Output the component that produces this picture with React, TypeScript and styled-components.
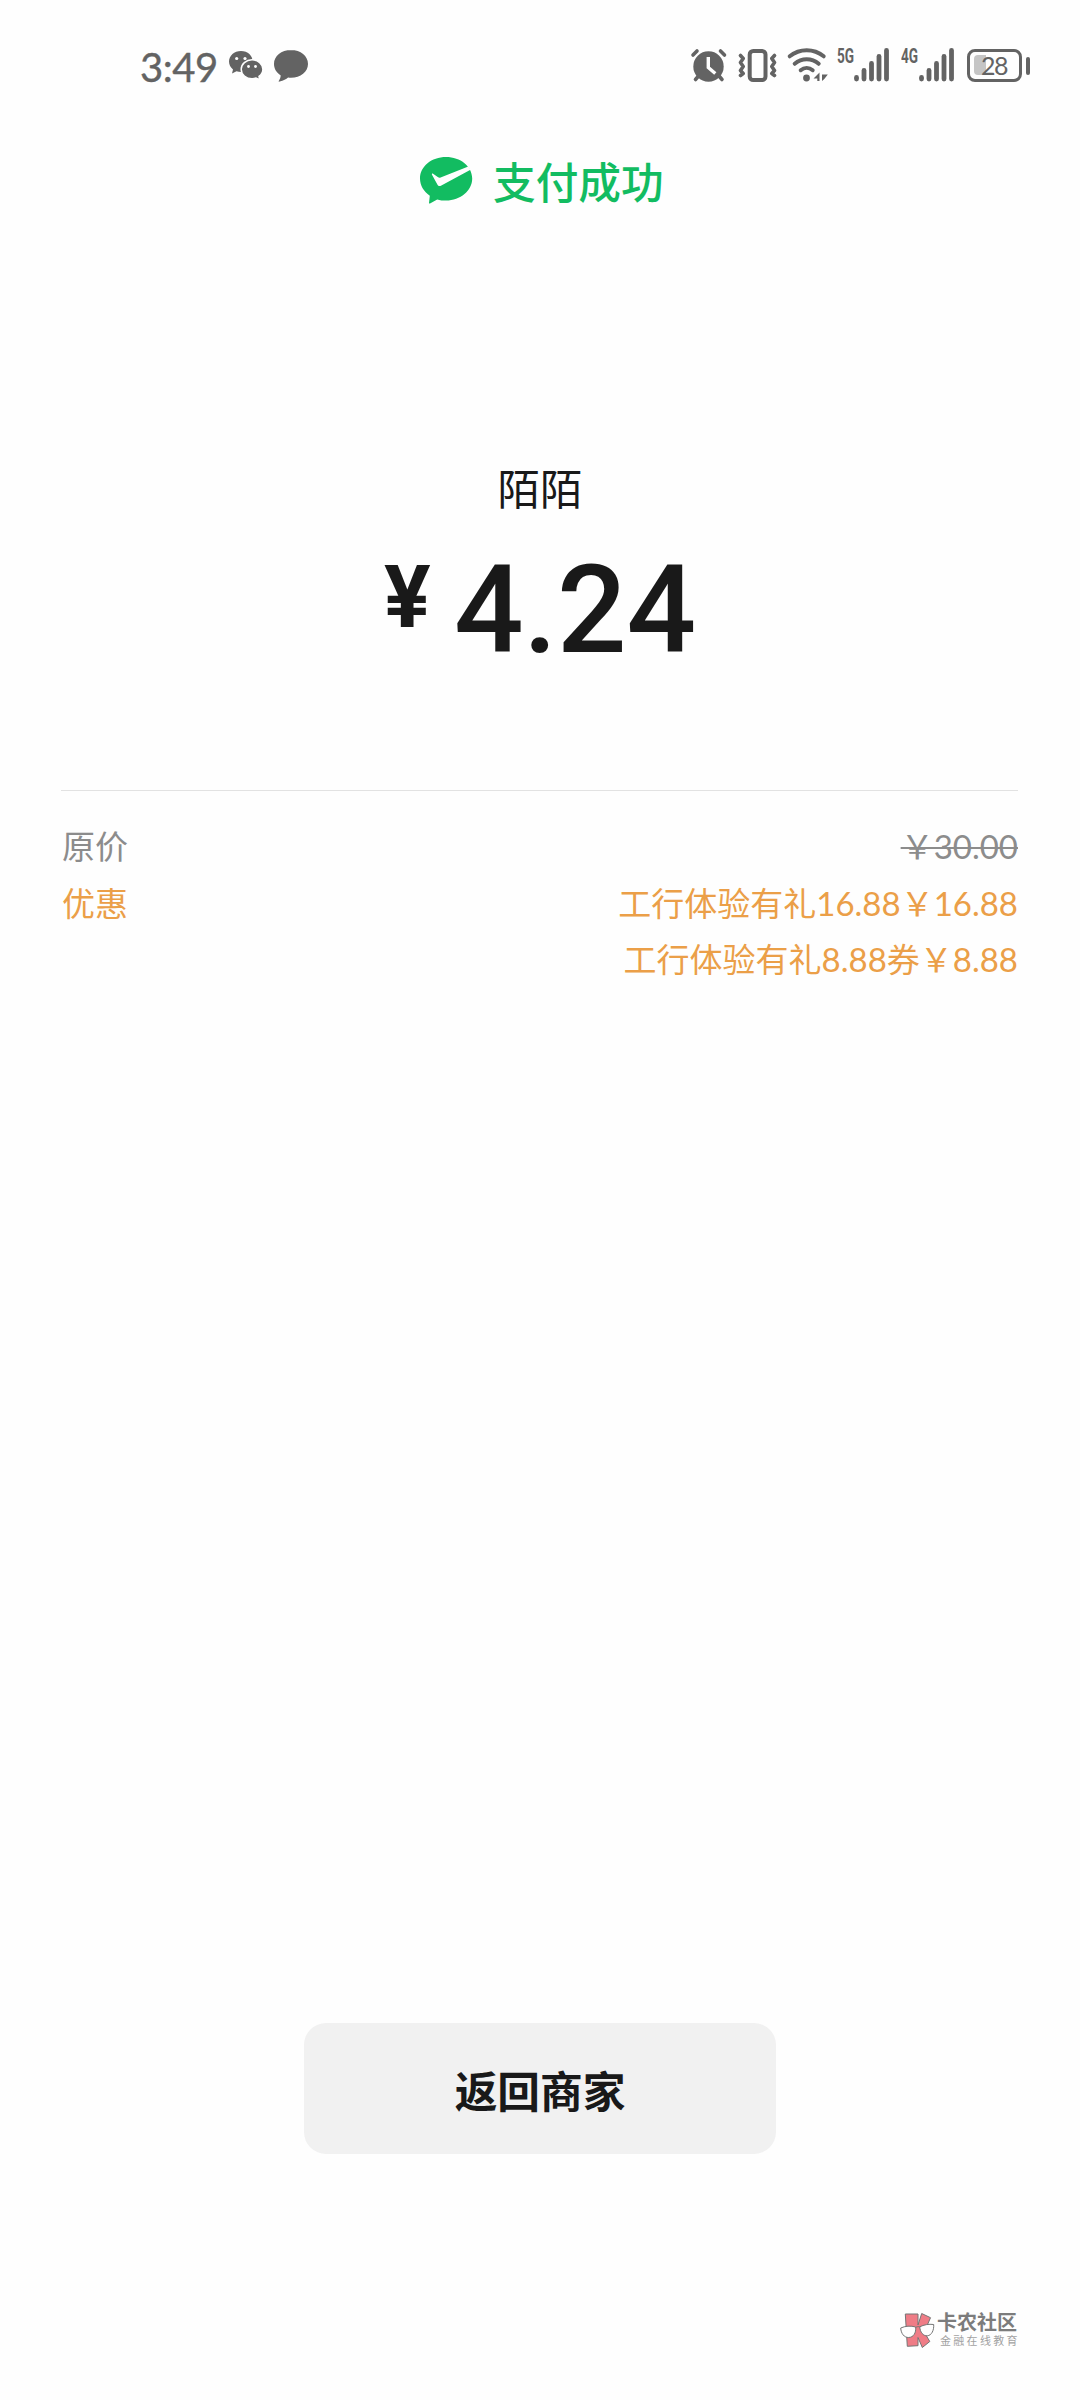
import React from "react";
import styled, { createGlobalStyle } from "styled-components";

const INK = "#191919";
const STATUS = "#636363";
const GREEN = "#12bc61";
const ORANGE = "#eb9f48";

const GlobalStyle = createGlobalStyle`
  *, *::before, *::after { box-sizing: border-box; }
  body { margin: 0; background: #fefefe; }
`;

const Screen = styled.div`
  width: 1080px;
  height: 2400px;
  display: flex;
  flex-direction: column;
  background: #fefefe;
  color: ${INK};
  font-family: Lato, "Noto Sans CJK SC", sans-serif;
`;

const StatusBar = styled.header`
  height: 84px;
  padding: 48px 49px 0 140px;
  display: flex;
  justify-content: space-between;
  color: ${STATUS};
`;

const StatusGroup = styled.div`
  display: flex;
  height: 36px;
`;

const Clock = styled.span`
  width: 89px;
  font-size: 40px;
  line-height: 38px;
  letter-spacing: -0.5px;
  white-space: nowrap;
  -webkit-text-stroke: 0.4px ${STATUS};
`;

const Icon = styled.svg<{ $gap?: number }>`
  display: block;
  flex: none;
  margin-left: ${(p) => p.$gap ?? 0}px;
  overflow: visible;
`;

const Network = styled.span<{ $width: number; $gap: number }>`
  width: ${(p) => p.$width}px;
  margin-left: ${(p) => p.$gap}px;
  height: 14px;
  font: 700 20px/16px Roboto, sans-serif;
  white-space: nowrap;
  transform: scaleX(0.68);
  transform-origin: 0 0;
`;

const Battery = styled.div`
  position: relative;
  width: 55px;
  height: 33px;
  margin: 1px 9px 0 13px;
  padding: 3.5px;
  display: flex;
  border: 3.5px solid ${STATUS};
  border-radius: 8px;

  &::after {
    content: "";
    position: absolute;
    left: 55.5px;
    top: 4.5px;
    width: 4.5px;
    height: 18px;
    border-radius: 2.5px;
    background: ${STATUS};
  }
`;

const BatteryLevel = styled.div`
  width: 12px;
  height: 20px;
  margin-top: -0.5px;
  border-radius: 4px 0 0 4px;
  background: #c5c5c5;
`;

const BatteryText = styled.span`
  position: absolute;
  left: 11px;
  top: 0;
  font-size: 25px;
  line-height: 27px;
  letter-spacing: -1.5px;
`;

const Result = styled.div`
  height: 46px;
  margin-top: 73px;
  padding-left: 420px;
  display: flex;
  gap: 20px;
  color: ${GREEN};
`;

const ResultText = styled.h1`
  margin: 0;
  font: 500 42.7px/46px "Noto Sans CJK SC", sans-serif;
`;

const Merchant = styled.div`
  margin-top: 256px;
  text-align: center;
  font: 400 42.5px/56px "Noto Sans CJK SC", sans-serif;
`;

const Amount = styled.div`
  height: 120px;
  margin-top: 32px;
  padding-left: 384px;
  display: flex;
  align-items: flex-start;
  font-family: Roboto, sans-serif;
`;

const Currency = styled.span`
  width: 70px;
  padding-top: 10px;
  font-size: 87px;
  line-height: 80px;
  font-weight: 700;
`;

const Value = styled.span`
  padding-top: 3px;
  font-size: 122.5px;
  line-height: 120px;
  font-weight: 500;
  letter-spacing: -0.3px;
`;

const Details = styled.section`
  margin: 123px 62px 0 61px;
  padding-top: 27px;
  border-top: 1px solid #e2e2e2;
`;

const DetailRow = styled.div<{ $tone: string }>`
  padding-left: 1px;
  display: flex;
  justify-content: space-between;
  color: ${(p) => p.$tone};
  font-size: 33px;
  line-height: 56.5px;
`;

const DetailValues = styled.div<{ $struck?: boolean }>`
  display: flex;
  flex-direction: column;
  align-items: flex-end;
  text-decoration: ${(p) => (p.$struck ? "line-through" : "none")};
  text-decoration-thickness: 2px;
`;

const ReturnButton = styled.button`
  width: 472px;
  height: 131px;
  margin: 1035.5px auto 0;
  padding: 0;
  border: 0;
  border-radius: 22px;
  background: #f1f1f1;
  color: ${INK};
  font: 700 42.7px/60px "Noto Sans CJK SC", sans-serif;
`;

const Brand = styled.footer`
  margin-top: 159px;
  padding-left: 900px;
  display: flex;
  gap: 3px;
`;

const BrandText = styled.div`
  display: flex;
  flex-direction: column;
  font-family: "Liberation Sans", "Noto Sans CJK SC", sans-serif;
  white-space: nowrap;
`;

const BrandName = styled.span`
  height: 22px;
  font-size: 20px;
  line-height: 20px;
  font-weight: 700;
  color: #7c7c7c;
`;

const BrandTagline = styled.span`
  padding-left: 3px;
  font-size: 11px;
  line-height: 12px;
  letter-spacing: 2.3px;
  color: #a2a2a2;
`;

const WeChatIcon = () => (
  <Icon width="34" height="36" viewBox="229 48 34 36">
    <path fill={STATUS} d="M241 51c-6.800 0-12 4.700-12 10.500 0 3.300 1.600 6 4 7.900l-1 4.200 4.500-2.300c1.500.5 3 .7 4.500.7 6.500 0 11.700-4.700 11.700-10.500S247.800 51 241 51Z" />
    <path fill={STATUS} stroke="#fefefe" strokeWidth="1.500" d="M252 59.800c-6 0-10.800 4.200-10.800 9.500s4.800 9.400 10.800 9.400c1.500 0 2.800-.2 4.100-.7l3.700 2-.8-3.600c2.400-1.700 3.900-4.200 3.900-7.100 0-5.300-4.900-9.500-10.900-9.500Z" />
    <g fill="#fefefe"><circle cx="236.700" cy="58.500" r="1.600" /><circle cx="245" cy="58.500" r="1.600" /><circle cx="248.500" cy="66.500" r="1.400" /><circle cx="255.500" cy="66.500" r="1.400" /></g>
  </Icon>
);

const ChatIcon = () => (
  <Icon $gap={11} width="34" height="36" viewBox="274 48 34 36">
    <path fill={STATUS} d="M291 50c-9.600 0-17 6-17 14 0 4.700 2.500 8.600 6.600 11.200.2 2-.8 4.200-1.700 5.500-.4.600.1 1.100.8.900 3.800-.8 6.500-2.600 8.400-4.100 1 .2 1.900.2 2.900.2 9.600 0 17-5.800 17-13.700 0-8-7.400-14-17-14Z" />
  </Icon>
);

const AlarmIcon = () => (
  <Icon width="36" height="36" viewBox="691 48 36 36" fill="none" stroke={STATUS} strokeLinecap="round">
    <circle cx="708.500" cy="66.500" r="15.200" fill={STATUS} stroke="none" />
    <path strokeWidth="3.600" d="m693 55 4-4M720.500 51l4 4M698.500 76l-3 3.500M719 76l3 3.500" />
    <path stroke="#fefefe" strokeWidth="3.400" strokeLinecap="butt" d="M708.300 57v10.500l7 6" />
  </Icon>
);

const VibrateIcon = () => (
  <Icon $gap={11} width="40" height="36" viewBox="738 48 40 36" fill="none" stroke={STATUS} strokeLinecap="round" strokeLinejoin="round">
    <rect x="749.700" y="51" width="15.800" height="29" rx="3.500" strokeWidth="4" />
    <path strokeWidth="3.600" d="m740.500 55.500 2.700 3-2.700 4 2.700 4-2.700 4 2.700 3-2.700 2M774.500 55.500l-2.700 3 2.700 4-2.700 4 2.700 4-2.700 3 2.700 2" />
  </Icon>
);

const WifiIcon = () => (
  <Icon $gap={10} width="40" height="36" viewBox="788 48 40 36" fill="none" stroke={STATUS} strokeLinecap="round">
    <path strokeWidth="4" d="M789.700 56.300c10-8 24-8 34 0M794.700 63.800c7-6 17-6 24 0M800.700 70.200c3.500-2.900 8.500-2.900 12 0" />
    <circle cx="806.500" cy="78" r="3.400" fill={STATUS} stroke="none" />
    <path fill={STATUS} stroke="none" d="M819.500 72.500V81h-2.200v-2.500h-3.800ZM822 74.500h5.800l-3.500 4.500-2.300 2Z" />
  </Icon>
);

const BARS = [
  { x: 2.5, top: 27 },
  { x: 10, top: 20 },
  { x: 17.5, top: 13 },
  { x: 25, top: 6 },
  { x: 32.5, top: 0 },
];

const SignalIcon = () => (
  <Icon width="35" height="36" viewBox="0 0 35 36" fill={STATUS}>
    {BARS.map((bar) => (
      <rect key={bar.x} x={bar.x - 2.4} y={bar.top} width="4.800" height={33.500 - bar.top} rx="2.400" />
    ))}
  </Icon>
);

const SuccessIcon = () => (
  <Icon width="53" height="47" viewBox="0 0 53 47">
    <path fill={GREEN} d="M26 0C11.500 0 0 9.400 0 21.500c0 7 3.800 13.100 9.800 17.200l-.8 7.200c0 .6.500.9 1 .6l7.200-4.100c2.800.8 5.700 1.200 8.800 1.200 14.500 0 26.200-9.800 26.200-22C52.200 9.400 40.500 0 26 0Z" />
    <path fill="#fefefe" d="M12 17.800c-.4-.9.400-1.500 1.100-1l5 3.500c.8.500 1.600.6 2.500.2L48.300 9.500l2.200 3.200-29.600 16c-1.400.8-2.700.4-3.400-1Z" />
  </Icon>
);

const BrandIcon = () => (
  <Icon width="34" height="35" viewBox="0 0 34 35" stroke="#757575" strokeWidth="1">
    <path fill="#ef7c86" d="M5.300 1H18v11L21.700.5l8.800 4.200-6.300 14.500 5.600 9.300-7.500 6L18 24.500v8.200l-10.700.6Z" />
    <path fill="#fefefe" d="M.7 15c4.500-2 10-2.500 15-1 .5 6-2.200 10.300-7 10.500C4.200 24.700 1 20.500.7 15ZM19.800 13.800c4-2 9-3 13.900-2.300.3 6-2 10.800-6.400 11.300-4 .3-7.300-3.500-7.500-9Z" />
    <path fill="none" d="M15.700 14.500c1.300-1 2.900-1 4.100-.7" />
  </Icon>
);

export default function App() {
  return (
    <>
      <GlobalStyle />
      <Screen>
        <StatusBar>
          <StatusGroup>
            <Clock>3:49</Clock>
            <WeChatIcon />
            <ChatIcon />
          </StatusGroup>
          <StatusGroup>
            <AlarmIcon />
            <VibrateIcon />
            <WifiIcon />
            <Network $width={17} $gap={9}>5G</Network>
            <SignalIcon />
            <Network $width={18} $gap={12}>4G</Network>
            <SignalIcon />
            <Battery>
              <BatteryLevel />
              <BatteryText>28</BatteryText>
            </Battery>
          </StatusGroup>
        </StatusBar>

        <Result>
          <SuccessIcon />
          <ResultText>支付成功</ResultText>
        </Result>

        <Merchant>陌陌</Merchant>
        <Amount>
          <Currency>¥</Currency>
          <Value>4.24</Value>
        </Amount>

        <Details>
          <DetailRow $tone="#8c8c8c">
            <span>原价</span>
            <DetailValues $struck>
              <span>￥30.00</span>
            </DetailValues>
          </DetailRow>
          <DetailRow $tone={ORANGE}>
            <span>优惠</span>
            <DetailValues>
              <span>工行体验有礼16.88￥16.88</span>
              <span>工行体验有礼8.88券￥8.88</span>
            </DetailValues>
          </DetailRow>
        </Details>

        <ReturnButton type="button">返回商家</ReturnButton>

        <Brand>
          <BrandIcon />
          <BrandText>
            <BrandName>卡农社区</BrandName>
            <BrandTagline>金融在线教育</BrandTagline>
          </BrandText>
        </Brand>
      </Screen>
    </>
  );
}
